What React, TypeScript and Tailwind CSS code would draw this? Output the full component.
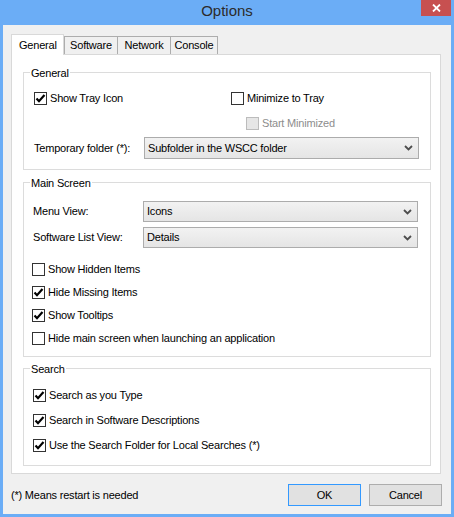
import React from 'react'

const font = "font-['Liberation_Sans',Arial,sans-serif]"

function Check({ checked, disabled }: { checked?: boolean; disabled?: boolean }) {
  return (
    <span
      className={`flex h-[13px] w-[13px] shrink-0 items-center justify-center border ${
        disabled ? 'border-[#bcbcbc] bg-[#e6e6e6]' : 'border-[#333333] bg-white'
      }`}
    >
      {checked && (
        <svg width="11" height="11" viewBox="0 0 11 11">
          <path d="M1.5 5.5 L4 8.2 L9.5 2" fill="none" stroke="#000" strokeWidth="2.2" />
        </svg>
      )}
    </span>
  )
}

function CheckRow({
  label,
  checked,
  disabled,
  className = '',
}: {
  label: string
  checked?: boolean
  disabled?: boolean
  className?: string
}) {
  return (
    <div className={`flex items-center gap-[3px] ${className}`}>
      <Check checked={checked} disabled={disabled} />
      <span className={disabled ? 'text-[#8d8d8d]' : 'text-black'}>{label}</span>
    </div>
  )
}

function Select({ value, className = '' }: { value: string; className?: string }) {
  return (
    <div
      className={`flex h-[21px] w-[275px] items-center justify-between border border-[#acacac] bg-gradient-to-b from-[#f2f2f2] to-[#e5e5e5] pl-[3px] pr-[5px] ${className}`}
    >
      <span>{value}</span>
      <svg width="9" height="6" viewBox="0 0 9 6">
        <path d="M1 1 L4.5 4.5 L8 1" fill="none" stroke="#4d4d4d" strokeWidth="1.8" />
      </svg>
    </div>
  )
}

function Group({
  title,
  height,
  className = '',
  children,
}: {
  title: string
  height: string
  className?: string
  children: React.ReactNode
}) {
  return (
    <div className={`ml-[11px] flex w-[408px] flex-col border border-[#dcdcdc] ${height} ${className}`}>
      <span className="-mt-[7px] ml-[6px] w-fit bg-white px-[1px] leading-[14px]">{title}</span>
      {children}
    </div>
  )
}

const tabs = [
  { label: 'Software', w: 'w-[53px]' },
  { label: 'Network', w: 'w-[53px]' },
  { label: 'Console', w: 'w-[48px] border-r' },
]

export default function App() {
  return (
    <div
      className={`flex h-[517px] w-[454px] flex-col bg-[#6badf6] text-[11px] tracking-[-0.2px] text-black ${font}`}
    >
      {/* title bar */}
      <div className="relative flex h-[25px] shrink-0 items-center justify-center pb-[3px]">
        <span className="text-[15px] tracking-normal text-[#2b2b2b]">Options</span>
        <div className="absolute right-[3px] top-0 flex h-[16px] w-[30px] items-center justify-center bg-[#c75050]">
          <svg width="9" height="8" viewBox="0 0 9 8">
            <path d="M1 0.5 L8 7.5 M8 0.5 L1 7.5" stroke="#fff" strokeWidth="1.8" />
          </svg>
        </div>
      </div>

      {/* client */}
      <div className="mx-[3px] mb-[3px] flex flex-1 flex-col bg-[#f0f0f0]">
        <div className="flex items-end pl-[8px] pt-[9px]">
          <div className="relative z-10 -mb-px flex h-[21px] w-[53px] items-start border-x border-t border-[#d9d9d9] bg-white pl-[7px] pt-[2px]">
            General
          </div>
          {tabs.map((t) => (
            <div
              key={t.label}
              className={`flex h-[18px] items-center justify-center border-l border-t border-[#adadad] bg-[#f0f0f0] pb-[1px] ${t.w}`}
            >
              {t.label}
            </div>
          ))}
        </div>

        <div className="ml-[8px] flex h-[420px] w-[430px] flex-col border border-[#d9d9d9] bg-white">
          <Group title="General" height="h-[98px]" className="mt-[17px]">
            <div className="mt-[10px] flex h-[17px] items-center pl-[10px]">
              <CheckRow label="Show Tray Icon" checked className="w-[197px]" />
              <CheckRow label="Minimize to Tray" />
            </div>
            <div className="mt-[8px] flex h-[17px] items-center pl-[222px]">
              <CheckRow label="Start Minimized" disabled />
            </div>
            <div className="mt-[5px] flex h-[22px] items-center pl-[10px]">
              <span className="w-[110px]">Temporary folder (*):</span>
              <Select value="Subfolder in the WSCC folder" className="h-[22px]" />
            </div>
          </Group>

          <Group title="Main Screen" height="h-[175px]" className="mt-[12px]">
            <div className="mt-[11px] flex items-center pl-[9px]">
              <span className="w-[110px]">Menu View:</span>
              <Select value="Icons" />
            </div>
            <div className="mt-[5px] flex items-center pl-[9px]">
              <span className="w-[110px]">Software List View:</span>
              <Select value="Details" />
            </div>
            <div className="mt-[10px] flex flex-col pl-[8px]">
              <CheckRow label="Show Hidden Items" className="h-[23px]" />
              <CheckRow label="Hide Missing Items" checked className="h-[23px]" />
              <CheckRow label="Show Tooltips" checked className="h-[23px]" />
              <CheckRow label="Hide main screen when launching an application" className="h-[23px]" />
            </div>
          </Group>

          <Group title="Search" height="h-[98px]" className="mt-[11px]">
            <div className="mt-[7px] flex flex-col pl-[9px]">
              <CheckRow label="Search as you Type" checked className="h-[25px]" />
              <CheckRow label="Search in Software Descriptions" checked className="h-[25px]" />
              <CheckRow label="Use the Search Folder for Local Searches (*)" checked className="h-[25px]" />
            </div>
          </Group>
        </div>

        <div className="flex items-center pl-[8px] pr-[9px] pt-[10px]">
          <span className="flex-1">(*) Means restart is needed</span>
          <button className="flex h-[22px] w-[73px] items-center justify-center border border-[#3399ff] bg-[#e1e1e1]">
            OK
          </button>
          <button className="ml-[8px] flex h-[22px] w-[73px] items-center justify-center border border-[#adadad] bg-[#e1e1e1]">
            Cancel
          </button>
        </div>
      </div>
    </div>
  )
}
